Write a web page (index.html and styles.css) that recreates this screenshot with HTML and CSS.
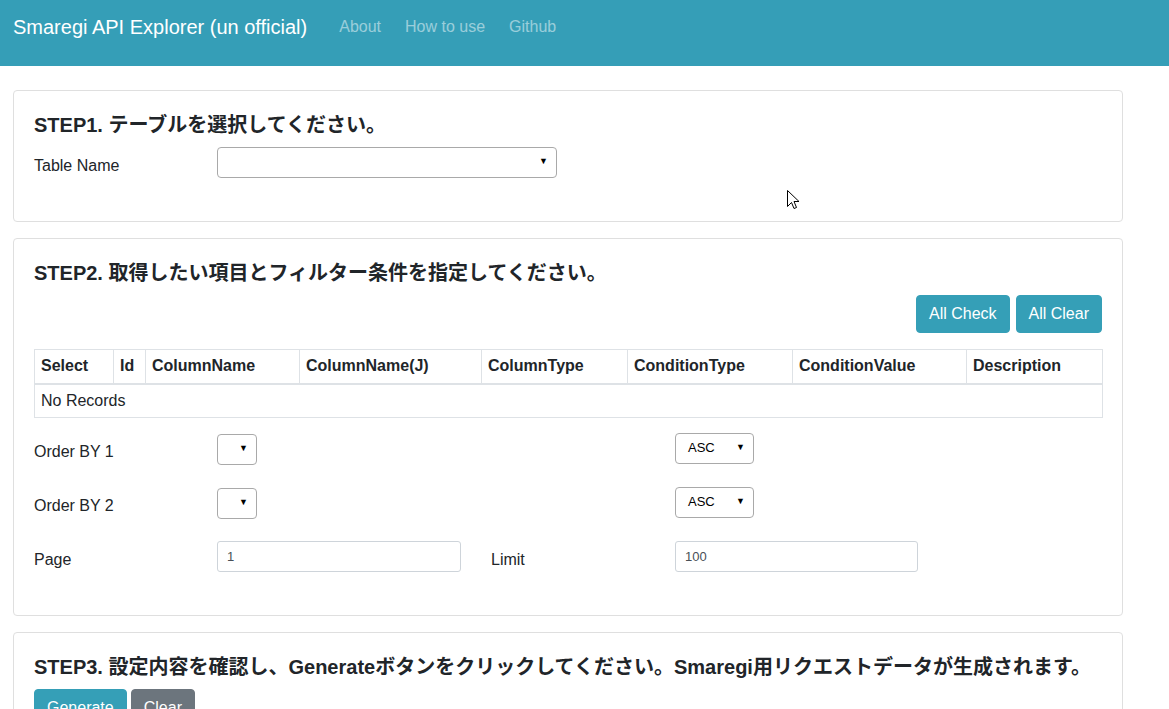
FILE: index.html
```html
<!DOCTYPE html>
<html lang="ja">
<head>
<meta charset="utf-8">
<title>Smaregi API Explorer</title>
<link rel="stylesheet" href="styles.css">
</head>
<body>
<nav class="navbar">
  <span class="brand">Smaregi API Explorer (un official)</span>
  <a class="nav-link" href="#">About</a>
  <a class="nav-link" href="#">How to use</a>
  <a class="nav-link" href="#">Github</a>
</nav>
<main class="container">
  <section class="card">
    <h5 class="card-title">STEP1. テーブルを選択してください。</h5>
    <div class="form-row">
      <label class="col-label">Table Name</label>
      <span class="select select-wide"><span class="select-text"></span><span class="caret">▼</span></span>
    </div>
  </section>

  <section class="card">
    <h5 class="card-title">STEP2. 取得したい項目とフィルター条件を指定してください。</h5>
    <div class="btn-bar">
      <button class="btn btn-info">All Check</button>
      <button class="btn btn-info">All Clear</button>
    </div>
    <table class="table">
      <thead>
        <tr>
          <th class="c1">Select</th>
          <th class="c2">Id</th>
          <th class="c3">ColumnName</th>
          <th class="c4">ColumnName(J)</th>
          <th class="c5">ColumnType</th>
          <th class="c6">ConditionType</th>
          <th class="c7">ConditionValue</th>
          <th class="c8">Description</th>
        </tr>
      </thead>
      <tbody>
        <tr><td colspan="8">No Records</td></tr>
      </tbody>
    </table>
    <div class="form-grid">
      <label class="col-label">Order BY 1</label>
      <div><span class="select select-narrow"><span class="select-text"></span><span class="caret">▼</span></span></div>
      <div></div>
      <div><span class="select select-asc"><span class="select-text">ASC</span><span class="caret">▼</span></span></div>
    </div>
    <div class="form-grid">
      <label class="col-label">Order BY 2</label>
      <div><span class="select select-narrow"><span class="select-text"></span><span class="caret">▼</span></span></div>
      <div></div>
      <div><span class="select select-asc"><span class="select-text">ASC</span><span class="caret">▼</span></span></div>
    </div>
    <div class="form-grid">
      <label class="col-label">Page</label>
      <div><input class="input" type="text" value="1"></div>
      <label class="col-label">Limit</label>
      <div><input class="input" type="text" value="100"></div>
    </div>
  </section>

  <section class="card">
    <h5 class="card-title">STEP3. 設定内容を確認し、Generateボタンをクリックしてください。Smaregi用リクエストデータが生成されます。</h5>
    <div class="btn-bar-left">
      <button class="btn btn-info">Generate</button>
      <button class="btn btn-secondary">Clear</button>
    </div>
  </section>
</main>
<svg class="cursor" width="13" height="21" viewBox="0 0 13 21" xmlns="http://www.w3.org/2000/svg">
  <path d="M0.5 0.5 L0.5 16.5 L4.5 12.5 L7 18.5 L9.5 17.5 L7 11.5 L12 11.5 Z" fill="#fff" stroke="#000" stroke-width="1" stroke-linejoin="miter"/>
</svg>
</body>
</html>
```

FILE: styles.css
```css
* { box-sizing: border-box; }

html, body {
  margin: 0;
  padding: 0;
  background: #fff;
  height: 709px;
  overflow: hidden;
}

body {
  font-family: "Liberation Sans", Arial, "Noto Sans CJK JP", sans-serif;
  font-size: 16px;
  line-height: 24px;
  color: #212529;
  position: relative;
}

.navbar {
  height: 66px;
  background: #359eb7;
  display: flex;
  align-items: flex-start;
  padding: 12px 14px 0 13px;
}

.brand {
  font-size: 20px;
  line-height: 30px;
  color: #fff;
  margin-right: 20px;
}

.nav-link {
  color: rgba(255, 255, 255, 0.5);
  text-decoration: none;
  font-size: 16px;
  line-height: 30px;
  padding: 0 12px;
}

.container {
  width: 1110px;
  margin: 24px 0 0 13px;
  display: flex;
  flex-direction: column;
  gap: 16px;
}

.card {
  border: 1px solid #dfdfdf;
  border-radius: 4px;
  padding: 20px;
  background: #fff;
}

.card-title {
  margin: 0 0 8px 0;
  font-size: 20px;
  line-height: 28px;
  font-weight: bold;
  font-family: "Liberation Sans", Arial, "Noto Sans CJK JP", sans-serif;
  white-space: nowrap;
}

.form-row {
  display: flex;
  align-items: flex-start;
  height: 38px;
  margin-bottom: 16px;
}

.form-row .col-label {
  width: 183px;
}

.col-label {
  padding: 7px 0;
  line-height: 24px;
  font-size: 16px;
}

.select {
  position: relative;
  display: inline-flex;
  align-items: center;
  height: 31px;
  border: 1px solid #a9a9a9;
  border-radius: 4px;
  background: #fff;
  font-size: 13px;
  color: #000;
}

.select-text {
  padding-left: 12px;
  flex: 1;
}

.caret {
  font-size: 9px;
  line-height: 10px;
  color: #000;
  position: absolute;
  right: 8px;
  top: 8px;
}

.select-wide { width: 340px; }
.select-narrow { width: 40px; }
.select-asc { width: 79px; }

.btn-bar {
  display: flex;
  justify-content: flex-end;
  gap: 6px;
  margin-bottom: 16px;
}

.btn-bar-left {
  display: flex;
  gap: 4px;
  margin-bottom: 16px;
}

.btn {
  font-family: "Liberation Sans", Arial, sans-serif;
  font-size: 16px;
  line-height: 24px;
  height: 38px;
  padding: 6px 12px;
  border: 1px solid transparent;
  border-radius: 4px;
  color: #fff;
  cursor: pointer;
}

.btn-info { background: #359fb7; border-color: #359fb7; }
.btn-secondary { background: #6c757d; border-color: #6c757d; }

.table {
  width: 1068px;
  border-collapse: collapse;
  table-layout: fixed;
  margin-bottom: 15px;
}

.table th, .table td {
  border: 1px solid #dee2e6;
  padding: 4px 6px;
  text-align: left;
  vertical-align: middle;
  font-size: 16px;
  line-height: 24px;
}

.table thead th {
  font-weight: bold;
  border-bottom: 2px solid #dee2e6;
  height: 34px;
}

.table td { height: 31px; }

.c1 { width: 79px; }
.c2 { width: 32px; }
.c3 { width: 154px; }
.c4 { width: 182px; }
.c5 { width: 146px; }
.c6 { width: 165px; }
.c7 { width: 174px; }
.c8 { width: 136px; }

.form-grid {
  display: grid;
  grid-template-columns: 153px 244px 154px 243px;
  column-gap: 30px;
  align-items: start;
  height: 38px;
  margin-bottom: 16px;
}

.input {
  width: 100%;
  height: 31px;
  border: 1px solid #ced4da;
  border-radius: 3px;
  padding: 0 9px;
  font-family: "Liberation Sans", Arial, sans-serif;
  font-size: 13px;
  color: #495057;
  background: #fff;
}

.cursor {
  position: absolute;
  left: 787px;
  top: 190px;
}
```
